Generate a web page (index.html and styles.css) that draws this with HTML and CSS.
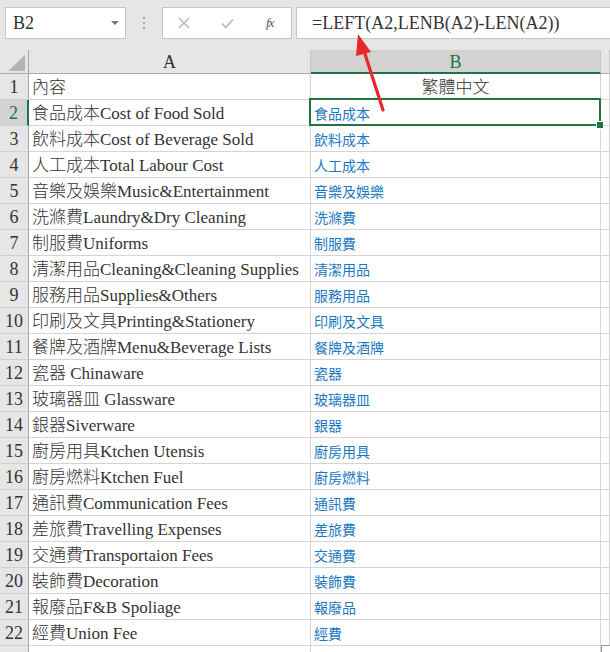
FILE: index.html
```html
<!DOCTYPE html>
<html lang="zh-Hant">
  <head>
    <meta charset="UTF-8" />
    <title>LEFT LENB LEN</title>
    <link rel="stylesheet" href="styles.css">
  </head>
  <body>
    <div class="toolbar">
      <div class="namebox"><span>B2</span><span class="caret"></span></div>
      <div class="grip"><i></i><i></i><i></i></div>
      <div class="fnbox">
        <span class="fnbtn">
          <svg width="12" height="12" viewBox="0 0 12 12"><path d="M1 1L11 11M11 1L1 11" stroke="#b9b9b9" stroke-width="1.6" fill="none"/></svg>
        </span>
        <span class="fnbtn">
          <svg width="13" height="11" viewBox="0 0 13 11"><path d="M1 5.5L4.8 9.5L12 1.5" stroke="#c4c4c4" stroke-width="2" fill="none"/></svg>
        </span>
        <span class="fnbtn fx">fx</span>
      </div>
      <div class="formula">=LEFT(A2,LENB(A2)-LEN(A2))</div>
    </div>

    <div class="sheet">
      <div class="row head">
        <div class="rh corner"><span class="tri"></span></div>
        <div class="ch a">A</div>
        <div class="ch b sel">B</div>
        <div class="ch c"></div>
      </div>
      <div class="row"><div class="rh">1</div><div class="cell a">內容</div><div class="cell b title">繁體中文</div><div class="cell c"></div></div>
      <div class="row"><div class="rh sel">2</div><div class="cell a">食品成本Cost of Food Sold</div><div class="cell b active">食品成本</div><div class="cell c"></div></div>
      <div class="row"><div class="rh">3</div><div class="cell a">飲料成本Cost of Beverage Sold</div><div class="cell b">飲料成本</div><div class="cell c"></div></div>
      <div class="row"><div class="rh">4</div><div class="cell a">人工成本Total Labour Cost</div><div class="cell b">人工成本</div><div class="cell c"></div></div>
      <div class="row"><div class="rh">5</div><div class="cell a">音樂及娛樂Music&amp;Entertainment</div><div class="cell b">音樂及娛樂</div><div class="cell c"></div></div>
      <div class="row"><div class="rh">6</div><div class="cell a">洗滌費Laundry&amp;Dry Cleaning</div><div class="cell b">洗滌費</div><div class="cell c"></div></div>
      <div class="row"><div class="rh">7</div><div class="cell a">制服費Uniforms</div><div class="cell b">制服費</div><div class="cell c"></div></div>
      <div class="row"><div class="rh">8</div><div class="cell a">清潔用品Cleaning&amp;Cleaning Supplies</div><div class="cell b">清潔用品</div><div class="cell c"></div></div>
      <div class="row"><div class="rh">9</div><div class="cell a">服務用品Supplies&amp;Others</div><div class="cell b">服務用品</div><div class="cell c"></div></div>
      <div class="row"><div class="rh">10</div><div class="cell a">印刷及文具Printing&amp;Stationery</div><div class="cell b">印刷及文具</div><div class="cell c"></div></div>
      <div class="row"><div class="rh">11</div><div class="cell a">餐牌及酒牌Menu&amp;Beverage Lists</div><div class="cell b">餐牌及酒牌</div><div class="cell c"></div></div>
      <div class="row"><div class="rh">12</div><div class="cell a">瓷器 Chinaware</div><div class="cell b">瓷器</div><div class="cell c"></div></div>
      <div class="row"><div class="rh">13</div><div class="cell a">玻璃器皿 Glassware</div><div class="cell b">玻璃器皿</div><div class="cell c"></div></div>
      <div class="row"><div class="rh">14</div><div class="cell a">銀器Siverware</div><div class="cell b">銀器</div><div class="cell c"></div></div>
      <div class="row"><div class="rh">15</div><div class="cell a">廚房用具Ktchen Utensis</div><div class="cell b">廚房用具</div><div class="cell c"></div></div>
      <div class="row"><div class="rh">16</div><div class="cell a">廚房燃料Ktchen Fuel</div><div class="cell b">廚房燃料</div><div class="cell c"></div></div>
      <div class="row"><div class="rh">17</div><div class="cell a">通訊費Communication Fees</div><div class="cell b">通訊費</div><div class="cell c"></div></div>
      <div class="row"><div class="rh">18</div><div class="cell a">差旅費Travelling Expenses</div><div class="cell b">差旅費</div><div class="cell c"></div></div>
      <div class="row"><div class="rh">19</div><div class="cell a">交通費Transportaion Fees</div><div class="cell b">交通費</div><div class="cell c"></div></div>
      <div class="row"><div class="rh">20</div><div class="cell a">裝飾費Decoration</div><div class="cell b">裝飾費</div><div class="cell c"></div></div>
      <div class="row"><div class="rh">21</div><div class="cell a">報廢品F&amp;B Spoliage</div><div class="cell b">報廢品</div><div class="cell c"></div></div>
      <div class="row"><div class="rh">22</div><div class="cell a">經費Union Fee</div><div class="cell b">經費</div><div class="cell c"></div></div>
      <div class="row"><div class="rh"></div><div class="cell a"></div><div class="cell b"></div><div class="cell c"></div></div>
    </div>

    <!-- quick analysis corner and the red pointer drawn over the sheet -->
    <div class="quick"></div>
    <svg class="arrow" width="610" height="652" viewBox="0 0 610 652">
      <path d="M383 110L364 51" stroke="#e8262b" stroke-width="3.2" fill="none" stroke-linecap="round"/>
      <path d="M358 34L371 52L356 56Z" fill="#e8262b"/>
    </svg>
  </body>
</html>
```

FILE: styles.css
```css
* {
  box-sizing: border-box;
}
body {
  margin: 0;
  width: 610px;
  height: 652px;
  overflow: hidden;
  position: relative;
  background: #fff;
  color: #222;
  font-family: "Liberation Serif", "Noto Sans CJK TC", serif;
}

/* formula bar */
.toolbar {
  height: 50px;
  background: #e6e6e6;
  display: flex;
  align-items: flex-start;
  padding: 7px 0 0 5px;
}
.namebox {
  width: 121px;
  height: 32px;
  background: #fff;
  border: 1px solid #c6c6c6;
  display: flex;
  align-items: center;
  justify-content: space-between;
  padding: 0 6px 0 7px;
  font-size: 18px;
  color: #333;
}
.caret {
  width: 0;
  height: 0;
  border-left: 4px solid transparent;
  border-right: 4px solid transparent;
  border-top: 4px solid #777;
}
.grip {
  width: 36px;
  height: 32px;
  display: flex;
  flex-direction: column;
  align-items: center;
  gap: 3px;
  padding-top: 10px;
}
.grip i {
  display: block;
  width: 2px;
  height: 2px;
  background: #a3a3a3;
}
.fnbox {
  width: 130px;
  height: 32px;
  background: #fff;
  border: 1px solid #c6c6c6;
  display: flex;
  align-items: center;
}
.fnbtn {
  width: 43px;
  display: flex;
  justify-content: center;
  align-items: center;
}
.fx {
  font-style: italic;
  font-size: 13px;
  color: #555;
  letter-spacing: -1px;
}
.formula {
  flex: 1;
  height: 32px;
  margin-left: 4px;
  background: #fff;
  border: 1px solid #c6c6c6;
  border-right: none;
  padding-left: 15px;
  font-size: 18px;
  line-height: 30px;
  color: #333;
  white-space: nowrap;
}

/* grid */
.row {
  display: flex;
  height: 26px;
}
.row.head {
  height: 24px;
  background: #e6e6e6;
}
.rh {
  width: 29px;
  flex: none;
  background: #e6e6e6;
  border-right: 1px solid #a8a8a8;
  border-bottom: 1px solid #d0d0d0;
  text-align: center;
  font-size: 18px;
  line-height: 26px;
  color: #333;
}
.rh.sel {
  background: #d2d2d2;
  border-right: 2px solid #217346;
  color: #217346;
}
.rh.corner {
  border-bottom: 1px solid #ababab;
  display: flex;
  align-items: flex-end;
  justify-content: flex-end;
  padding: 0 3px 2px 0;
}
.tri {
  width: 0;
  height: 0;
  border-left: 17px solid transparent;
  border-bottom: 16px solid #b4b4b4;
}
.ch {
  border-right: 1px solid #c6c6c6;
  border-bottom: 1px solid #ababab;
  text-align: center;
  font-size: 18px;
  line-height: 25px;
  color: #333;
}
.ch.sel {
  background: #d2d2d2;
  border-bottom: 2px solid #217346;
  color: #217346;
}
.a {
  width: 282px;
  flex: none;
}
.b {
  width: 290px;
  flex: none;
}
.c {
  flex: 1;
}
.cell {
  border-right: 1px solid #d4d4d4;
  border-bottom: 1px solid #d4d4d4;
  padding-left: 3px;
  font-size: 17px;
  line-height: 28px;
  white-space: nowrap;
  overflow: hidden;
}
.cell.a {
  font-weight: 300;
  color: #333;
}
.cell.b {
  font-family: "Noto Sans CJK TC", sans-serif;
  font-size: 14px;
  color: #1b78c0;
  line-height: 27px;
}
.cell.b.title {
  font-family: "Liberation Serif", "Noto Sans CJK TC", serif;
  font-size: 17px;
  font-weight: 300;
  line-height: 28px;
  color: #333;
  text-align: center;
  padding-left: 0;
}
.cell.active {
  position: relative;
  overflow: visible;
}
.cell.active::before {
  content: "";
  position: absolute;
  left: -2px;
  top: -2px;
  right: -1px;
  bottom: -1px;
  border: 2px solid #217346;
}
.cell.active::after {
  content: "";
  position: absolute;
  right: -4px;
  bottom: -4px;
  width: 6px;
  height: 6px;
  background: #217346;
  border: 1px solid #fff;
}

.quick {
  position: absolute;
  left: 601px;
  top: 645px;
  width: 12px;
  height: 10px;
  background: #fff;
  border: 1px solid #9a9a9a;
}
.arrow {
  position: absolute;
  left: 0;
  top: 0;
  pointer-events: none;
}
```
